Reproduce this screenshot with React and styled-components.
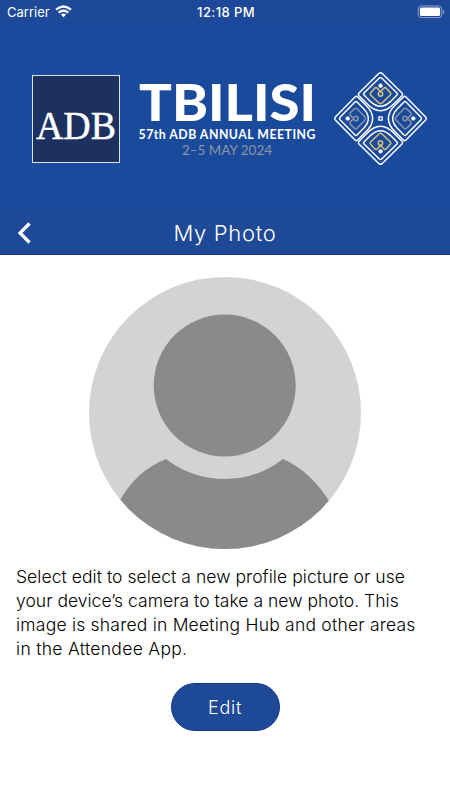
import React from "react";
import styled, { createGlobalStyle } from "styled-components";

const GlobalStyle = createGlobalStyle`
    * {
        box-sizing: border-box;
    }

    body {
        margin: 0;
        background-color: white;
        font-family: "Inter", "Liberation Sans", sans-serif;
    }
`

const message = [
    {text: "Select edit to select a new profile picture or use", spacing: 0.06},
    {text: "your device’s camera to take a new photo. This", spacing: 0.02},
    {text: "image is shared in Meeting Hub and other areas", spacing: 0.22},
    {text: "in the Attendee App.", spacing: 0.3},
];

const tiles = [
    {angle: 0, color: "#d8c27c"},
    {angle: 90, color: "#8a93a3"},
    {angle: 180, color: "#d8c27c"},
    {angle: 270, color: "#8a93a3"},
];


function WifiIcon() {
    return (
        <svg width="17" height="13" viewBox="0 0 17 13" fill="none" stroke="white" strokeWidth="2.2">
            <path d="M1 4.7Q8.5 -1.7 16 4.7" />
            <path d="M3.7 7.6Q8.5 3.5 13.3 7.6" />
            <path d="M5.9 9.5Q8.5 7.4 11.1 9.5L8.5 12.3Z" fill="white" stroke="none" />
        </svg>
    );
}

function BatteryIcon() {
    return (
        <svg width="28" height="14" viewBox="0 0 28 14">
            <rect x="1.2" y="1" width="23.6" height="11.6" rx="3.2" fill="none" stroke="#8fa4cc" />
            <rect x="2.9" y="2.6" width="20.2" height="8.4" rx="1.6" fill="white" />
            <path d="M26 5V9Q27.4 8.3 27.4 7T26 5Z" fill="#8fa4cc" />
        </svg>
    );
}

function Ornament() {
    return (
        <svg width="110" height="110" viewBox="0 0 330 330" fill="none" stroke="white" strokeLinejoin="round">
            {tiles.map((t) => (
                <g key={t.angle} transform={`rotate(${t.angle} 166.5 160.5)`}>
                    <path strokeWidth="4.5" d="M102 84L162 25Q166.5 21 171 25L231 84Q235 88 231 92L207 116Q187 137 166.5 137T126 116L102 92Q98 88 102 84Z" />
                    <path strokeWidth="4.5" d="M117 84L163 39Q166.5 36 170 39L216 84Q219 87 216 90L196 110Q181 124 166.5 124T137 110L117 90Q114 87 117 84Z" />
                    <path strokeWidth="4.5" stroke={t.color} d="M166.5 80L157 70Q153 66 149 70L137 83Q134 86.500 137 90L162 114Q166.5 118 171 114L196 90Q199 86.500 196 83L184 70Q180 66 176 70L166.5 80" />
                    <circle cx="166.5" cy="87" r="6.500" strokeWidth="4.500" stroke={t.color} />
                    <circle cx="166.5" cy="62" r="5.5" fill="white" strokeWidth="2" />
                </g>
            ))}
            <rect x="161.5" y="155.5" width="10" height="10" strokeWidth="4" />
        </svg>
    );
}

function Avatar() {
    return (
        <Photo viewBox="0 0 272 272">
            <clipPath id="round"><circle cx="136" cy="136" r="136" /></clipPath>
            <g clipPath="url(#round)">
                <rect width="272" height="272" fill="#d3d3d3" />
                <circle cx="135.7" cy="108.5" r="71" fill="#8a8a8a" />
                <path d="M29 227Q46 194 77 182Q103 202 136 202Q168 202 194 182Q222 194 242 227V272H29Z" fill="#8a8a8a" />
            </g>
        </Photo>
    );
}


export default function App() {
    return (
        <Screen>
            <GlobalStyle />
            <StatusBar>
                <Carrier>Carrier <WifiIcon /></Carrier>
                <Clock>12:18 PM</Clock>
                <Battery><BatteryIcon /></Battery>
            </StatusBar>
            <Banner>
                <AdbLogo>
                    <svg width="86" height="86">
                        <text x="3" y="62.5" textLength="80" lengthAdjust="spacingAndGlyphs" fontFamily="Liberation Serif, serif" fontSize="41" fill="white" stroke="white" strokeWidth="0.5">ADB</text>
                    </svg>
                </AdbLogo>
                <svg width="200" height="100" fontFamily="Lato, sans-serif" fill="white">
                    <text x="9" y="50.5" textLength="177" lengthAdjust="spacingAndGlyphs" fontSize="52" fontWeight="900">TBILISI</text>
                    <text x="8.5" y="69" textLength="177" fontSize="12.3" fontWeight="700">57th ADB ANNUAL MEETING</text>
                    <text x="52" y="85" textLength="90" lengthAdjust="spacingAndGlyphs" fontSize="13.5" fill="#8c95a3">2–5 MAY 2024</text>
                </svg>
                <OrnamentBox><Ornament /></OrnamentBox>
            </Banner>
            <Header>
                <Back aria-label="Back">
                    <svg width="14" height="22" viewBox="0 0 14 22" fill="none" stroke="white" strokeWidth="3.2">
                        <path d="M12.5 1.5L3 11L12.5 20.5" />
                    </svg>
                </Back>
                <h1>My Photo</h1>
            </Header>
            <Main>
                <Avatar />
                <Message>
                    {message.map((m) => <Line key={m.text} $spacing={m.spacing}>{m.text}</Line>)}
                </Message>
                <Button>Edit</Button>
            </Main>
        </Screen>
    );
}

const Screen = styled.div`
    width: 450px;
    height: 800px;
    display: flex;
    flex-direction: column;
    overflow: hidden;
    background-color: white;
`

const StatusBar = styled.div`
    height: 23px;
    display: grid;
    grid-template-columns: 1fr auto 1fr;
    align-items: center;
    padding: 0 5px 0 7px;
    font-size: 13px;
    color: white;
    background-color: #1d4998;
`

const Carrier = styled.div`
    display: flex;
    align-items: center;
    gap: 5px;
`

const Clock = styled.div`
    font-weight: 500;
    letter-spacing: 0.4px;
`

const Battery = styled.div`
    display: flex;
    justify-content: flex-end;
`

const Banner = styled.div`
    height: 186px;
    display: flex;
    align-items: flex-start;
    padding: 47px 0 0 32px;
    background-color: #1a4a9c;
`

const AdbLogo = styled.div`
    width: 88px;
    height: 88px;
    margin: 5px 10px 0 0;
    border: 1px solid #dce3f0;
    background-color: #1c3160;
`

const OrnamentBox = styled.div`
    margin: -5px 0 0 -5px;
`

const Header = styled.div`
    height: 46px;
    display: grid;
    grid-template-columns: 50px 1fr 50px;
    align-items: center;
    padding-top: 2px;
    color: white;
    background-color: #1e4997;
    border-bottom: 1px solid #0b3290;

    h1 {
        margin: 0;
        font-size: 22px;
        font-weight: 300;
        letter-spacing: 0.7px;
        text-align: center;
    }
`

const Back = styled.button`
    display: flex;
    padding: 0 0 0 17px;
    border: none;
    background: none;
`

const Main = styled.div`
    display: flex;
    flex-direction: column;
    align-items: center;
    padding: 22px 16px 0;
`

const Photo = styled.svg`
    width: 272px;
    height: 272px;
`

const Message = styled.div`
    width: 418px;
    margin-top: 16px;
    display: flex;
    flex-direction: column;
    font-size: 17.5px;
    font-weight: 300;
    line-height: 24px;
    white-space: nowrap;
`

const Line = styled.span`
    letter-spacing: ${(props) => props.$spacing}px;
`

const Button = styled.button`
    width: 109px;
    height: 48px;
    margin-top: 22px;
    padding: 0;
    border: 1px solid #12388f;
    border-radius: 24px;
    font-family: inherit;
    font-size: 18px;
    font-weight: 300;
    letter-spacing: 0.7px;
    color: white;
    background-color: #1e4997;
`
